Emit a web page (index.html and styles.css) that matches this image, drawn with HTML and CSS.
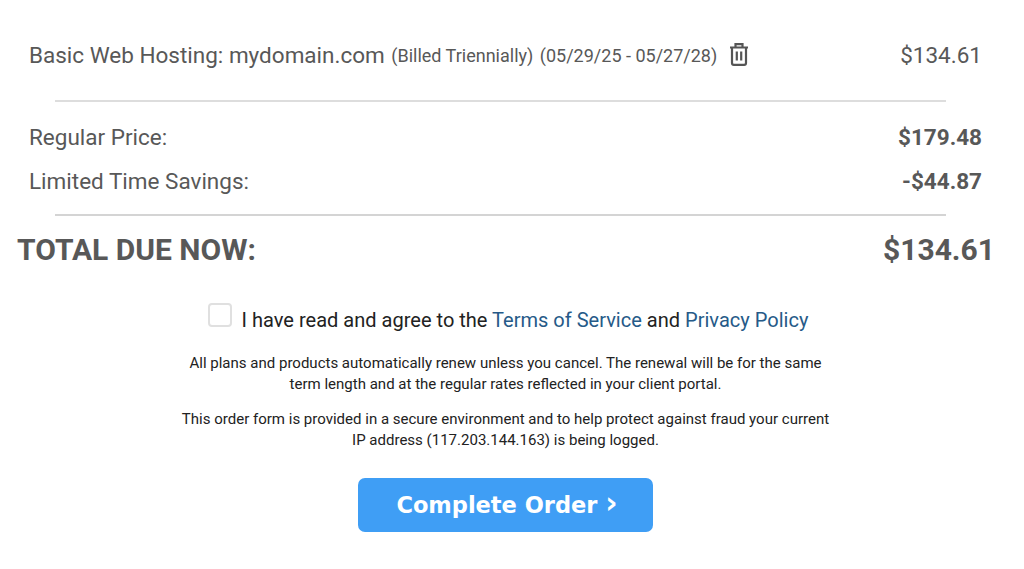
FILE: index.html
```html
<!DOCTYPE html>
<html lang="en">
<head>
<meta charset="utf-8">
<title>Order Summary</title>
<link rel="stylesheet" href="styles.css">
</head>
<body>
<main class="page">
  <div class="line-item">
    <div class="item-desc">
      <span class="item-name">Basic Web Hosting: mydomain.com</span>
      <span class="item-meta">(Billed Triennially)</span>
      <span class="item-meta">(05/29/25 - 05/27/28)</span>
      <svg class="trash" viewBox="0 0 20 24" width="20" height="24" aria-hidden="true">
        <path d="M1 5.5h18M6.5 5V2.2h7V5M3 5.5V21a1.8 1.8 0 0 0 1.8 1.8h10.4A1.8 1.8 0 0 0 17 21V5.5M7.8 9.5v9M12.2 9.5v9" fill="none" stroke="#555" stroke-width="2.2"/>
      </svg>
    </div>
    <div class="item-price">$134.61</div>
  </div>
  <hr class="rule rule-first">
  <div class="sum-row"><span>Regular Price:</span><strong>$179.48</strong></div>
  <div class="sum-row sum-row-second"><span>Limited Time Savings:</span><strong>-$44.87</strong></div>
  <hr class="rule rule-second">
  <div class="total"><span>TOTAL DUE NOW:</span><span>$134.61</span></div>
  <label class="agree">
    <span class="checkbox"></span>
    <span class="agree-text">I have read and agree to the <a href="#">Terms of Service</a> and <a href="#">Privacy Policy</a></span>
  </label>
  <p class="note note-first">All plans and products automatically renew unless you cancel. The renewal will be for the same<br>term length and at the regular rates reflected in your client portal.</p>
  <p class="note note-second">This order form is provided in a secure environment and to help protect against fraud your current<br>IP address (117.203.144.163) is being logged.</p>
  <div class="actions"><button class="complete" type="button">Complete Order <span class="chev">›</span></button></div>
</main>
</body>
</html>
```

FILE: styles.css
```css
* { box-sizing: border-box; }
html, body { margin: 0; padding: 0; background: #fff; }
body { font-family: Roboto, "Liberation Sans", sans-serif; color: #585858; overflow: hidden; }
.page { width: 1024px; height: 569px; padding-top: 38px; }
.line-item { display: flex; justify-content: space-between; align-items: center; height: 34px; padding: 0 42px 0 29px; }
.item-desc { display: flex; align-items: center; }
.item-name { font-size: 22.5px; }
.item-meta { font-size: 18px; margin-left: 6.5px; }
.trash { margin-left: 12px; margin-top: -3px; }
.item-price { font-size: 22.5px; }
.rule { border: 0; height: 2px; background: #ddd; margin: 0 78px 0 55px; }
.rule-first { margin-top: 28px; }
.rule-second { margin-top: 18px; background: #d4d4d4; }
.sum-row { display: flex; justify-content: space-between; align-items: center; height: 30px; margin-top: 20px; padding: 0 42px 0 29px; font-size: 22.5px; }
.sum-row strong { font-weight: 700; }
.sum-row-second { margin-top: 14px; }
.total { display: flex; justify-content: space-between; align-items: center; height: 40px; margin-top: 13px; padding: 0 29px 0 17px; font-size: 30px; font-weight: 700; }
.agree { display: flex; justify-content: center; align-items: flex-start; margin-top: 34px; height: 48px; padding-right: 8px; color: #222; font-size: 20.05px; }
.checkbox { width: 24px; height: 24px; border: 2px solid #e0e0e0; border-radius: 4px; margin-right: 10px; background: #fff; }
.agree-text { margin-top: 5px; }
.agree a { color: #265a88; text-decoration: none; }
.note { margin: 0; padding-right: 13px; text-align: center; font-size: 15.03px; line-height: 21px; color: #222; }
.note-first { margin-top: 2px; }
.note-second { margin-top: 14px; }
.actions { display: flex; justify-content: center; margin-top: 27px; padding-right: 14px; }
.complete { width: 295px; height: 54px; border: 0; border-radius: 7px; background: #3f9ef5; color: #fff; font-family: "DejaVu Sans", sans-serif; font-size: 22.5px; font-weight: 700; padding: 0 6px 0 10px; }
.chev { font-size: 30px; line-height: 20px; }
```
